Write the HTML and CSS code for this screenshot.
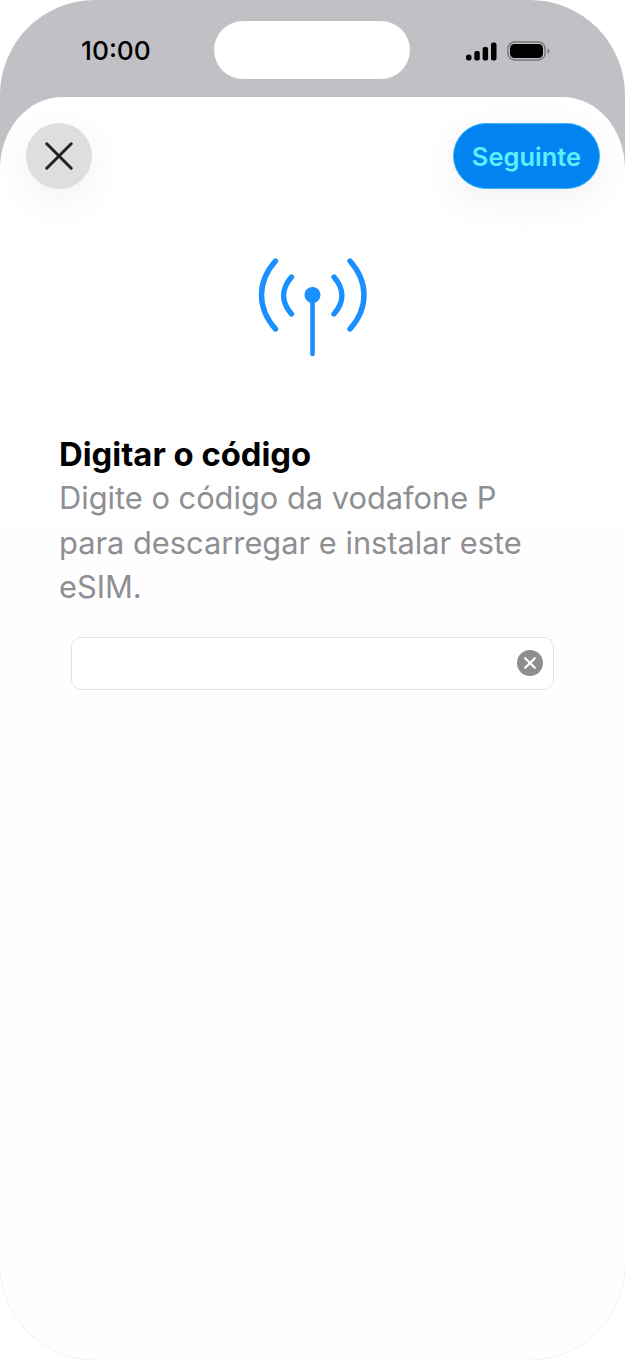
FILE: index.html
```html
<!DOCTYPE html>
<html lang="pt">
<head>
    <meta charset="UTF-8">
    <meta name="viewport" content="width=device-width, initial-scale=1.0">
    <title>Digitar o código</title>
    <link rel="stylesheet" href="styles.css">
</head>
<body>

    <div class="phone">
        <div class="status-bar">
            <span class="time">10:00</span>
            <div class="island"></div>
            <div class="status-icons">
                <svg class="signal" width="31" height="19" viewBox="0 0 31 19">
                    <rect x="0" y="12.5" width="5.5" height="6" rx="2.5"/>
                    <rect x="8.3" y="9" width="5.5" height="9.5" rx="2"/>
                    <rect x="16.6" y="5" width="5.5" height="13.5" rx="2"/>
                    <rect x="25" y="0.5" width="5.5" height="18" rx="2"/>
                </svg>
                <svg class="battery" width="43" height="20" viewBox="0 0 43 20">
                    <rect x="1" y="1" width="37" height="18" rx="6.5" fill="none" stroke="#77767b" stroke-width="1.4"/>
                    <rect x="3" y="3" width="33" height="14" rx="4.5" fill="#000"/>
                    <path d="M40.5 7.5 C42 8 42.5 9 42.5 10 C42.5 11 42 12 40.5 12.5 Z" fill="#77767b"/>
                </svg>
            </div>
        </div>

        <div class="sheet">
            <div class="nav">
                <button type="button" class="close" aria-label="Fechar">
                    <svg width="28" height="28" viewBox="0 0 28 28">
                        <path d="M1.8 1.8 L26.2 26.2 M26.2 1.8 L1.8 26.2" fill="none" stroke="#222" stroke-width="3" stroke-linecap="round"/>
                    </svg>
                </button>
                <button type="button" class="next">Seguinte</button>
            </div>

            <svg class="antenna" width="110" height="102" viewBox="0 0 110 102">
                <g fill="none" stroke="#1a8fff" stroke-linecap="round">
                    <path d="M54.5 39 V98" stroke-width="4.6"/>
                    <path d="M17.5 5 C-1.2 26 -1.2 52 17.5 73" stroke-width="5.4"/>
                    <path d="M92 5 C110.7 26 110.7 52 92 73" stroke-width="5.4"/>
                    <path d="M33.5 21 C23 33 23 46 33.5 58" stroke-width="5.4"/>
                    <path d="M76 21 C86.5 33 86.5 46 76 58" stroke-width="5.4"/>
                </g>
                <circle cx="54.5" cy="39" r="8" fill="#1a8fff"/>
            </svg>

            <div class="copy">
                <h1>Digitar o código</h1>
                <p>Digite o código da vodafone P para descarregar e instalar este eSIM.</p>
            </div>

            <div class="field">
                <span class="clear" aria-label="Limpar">
                    <svg width="12" height="12" viewBox="0 0 12 12">
                        <path d="M1.2 1.2 L10.8 10.8 M10.8 1.2 L1.2 10.8" fill="none" stroke="#fff" stroke-width="2.2" stroke-linecap="round"/>
                    </svg>
                </span>
            </div>
        </div>
    </div>

</body>
</html>
```

FILE: styles.css
```css
html, body {
    margin: 0;
    padding: 0;
    background-color: #fff;
}
body {
    font-family: Inter, "Liberation Sans", sans-serif;
}
.phone {
    width: 625px;
    height: 1360px;
    background-color: #c1c0c5;
    border-radius: 95px;
    overflow: hidden;
    display: flex;
    flex-direction: column;
}
.status-bar {
    height: 97px;
    flex-shrink: 0;
    box-sizing: border-box;
    padding: 21px 75px 0 81px;
    display: flex;
    justify-content: space-between;
    align-items: flex-start;
}
.time {
    width: 70px;
    margin-top: 12px;
    font-size: 26.3px;
    line-height: 36px;
    font-weight: 500;
    color: #000;
}
.island {
    width: 196px;
    height: 58px;
    margin-left: 6px;
    border-radius: 29px;
    background-color: #fff;
}
.status-icons {
    width: 84px;
    margin-top: 20px;
    display: flex;
    align-items: center;
    justify-content: space-between;
}
.sheet {
    flex: 1;
    background-color: #fefefe;
    border-radius: 62px 62px 0 0 / 72px 72px 0 0;
    background-image: linear-gradient(#fff, #fefefe 500px, #fefefe 1000px, #fdfdfd);
}
.nav {
    padding: 26px 25px 0 26px;
    display: flex;
    justify-content: space-between;
}
button {
    border: none;
    cursor: pointer;
    font-family: inherit;
    padding: 0;
}
.close {
    width: 66px;
    height: 66px;
    border-radius: 50%;
    background-color: #dedede;
    box-shadow: 0 1px 0 #f6f6f6, 0 10px 40px rgba(0, 0, 0, 0.06);
    display: flex;
    align-items: center;
    justify-content: center;
}
.next {
    width: 147px;
    height: 66px;
    border-radius: 33px;
    background-color: #0183f1;
    border: 1px solid #39b4f8;
    color: #5cf0ff;
    font-size: 25.5px;
    font-weight: 600;
    box-shadow: 0 10px 40px rgba(0, 0, 0, 0.06);
}
.antenna {
    display: block;
    margin: 67px auto 0;
}
.copy {
    margin-top: 75px;
    padding: 0 59px;
}
h1 {
    margin: 0;
    font-size: 32.8px;
    line-height: 43px;
    font-weight: 700;
    color: #000;
}
p {
    margin: 0;
    font-size: 30.8px;
    line-height: 44.5px;
    font-weight: 400;
    color: #8e8e93;
}
.field {
    margin: 27px 71px 0;
    height: 53px;
    box-sizing: border-box;
    border: 1px solid #e4e4e6;
    border-radius: 10px;
    background-color: #fff;
    display: flex;
    align-items: center;
    justify-content: flex-end;
    padding-right: 10px;
}
.clear {
    width: 26px;
    height: 26px;
    border-radius: 50%;
    background-color: #8e8e90;
    display: flex;
    align-items: center;
    justify-content: center;
}
```
